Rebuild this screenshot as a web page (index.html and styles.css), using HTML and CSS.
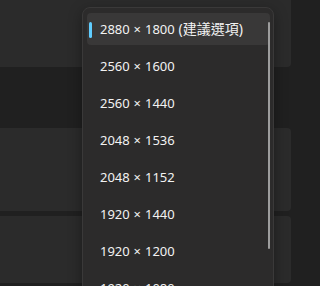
FILE: index.html
```html
<!DOCTYPE html>
<html lang="zh-Hant">
<head>
<meta charset="utf-8">
<link rel="stylesheet" href="styles.css">
</head>
<body>
<div class="page">
  <div class="card card-top"></div>
  <div class="section-gap"></div>
  <div class="card card-mid"></div>
  <div class="card card-low"></div>
</div>
<div class="menu">
  <ul class="list">
    <li class="item selected"><span class="indicator"></span>2880 × 1800 <span class="note">(建議選項)</span></li>
    <li class="item">2560 × 1600</li>
    <li class="item">2560 × 1440</li>
    <li class="item">2048 × 1536</li>
    <li class="item">2048 × 1152</li>
    <li class="item">1920 × 1440</li>
    <li class="item">1920 × 1200</li>
    <li class="item">1920 × 1080</li>
  </ul>
  <div class="scrollbar"></div>
</div>
</body>
</html>
```
FILE: styles.css
```css
html, body {
  margin: 0;
  padding: 0;
}
body {
  width: 315px;
  height: 286px;
  overflow: hidden;
  background: #202020;
  font-family: "Noto Sans", "Noto Sans CJK TC", sans-serif;
  position: relative;
}
.page {
  display: flex;
  flex-direction: column;
  margin: -20px 24px 0 -20px;
}
.card {
  background: #2b2b2b;
  border-radius: 4px;
}
.card-top {
  height: 87px;
}
.section-gap {
  height: 61px;
}
.card-mid {
  height: 83px;
  margin-bottom: 5px;
}
.card-low {
  height: 67px;
}
.menu {
  position: absolute;
  left: 82px;
  top: 7px;
  width: 190px;
  height: 320px;
  background: #2c2b2b;
  border: 1px solid #3a3939;
  border-radius: 8px;
  box-shadow: 0 4px 14px rgba(0, 0, 0, 0.35);
}
.list {
  list-style: none;
  margin: 0;
  padding: 5px 3px 0 4px;
  display: flex;
  flex-direction: column;
  gap: 5px;
}
.item {
  position: relative;
  height: 32px;
  line-height: 32px;
  padding-left: 13px;
  border-radius: 4px;
  color: #f2f2f2;
  font-size: 13px;
  word-spacing: 0.5px;
  white-space: nowrap;
}
.note {
  font-size: 14px;
}
.item.selected {
  background: #393838;
}
.indicator {
  position: absolute;
  left: 2px;
  top: 9px;
  width: 3px;
  height: 16px;
  border-radius: 2px;
  background: #60cdff;
}
.scrollbar {
  position: absolute;
  left: 185px;
  top: 14px;
  width: 2px;
  height: 227px;
  border-radius: 1px;
  background: #9d9d9d;
}
```
